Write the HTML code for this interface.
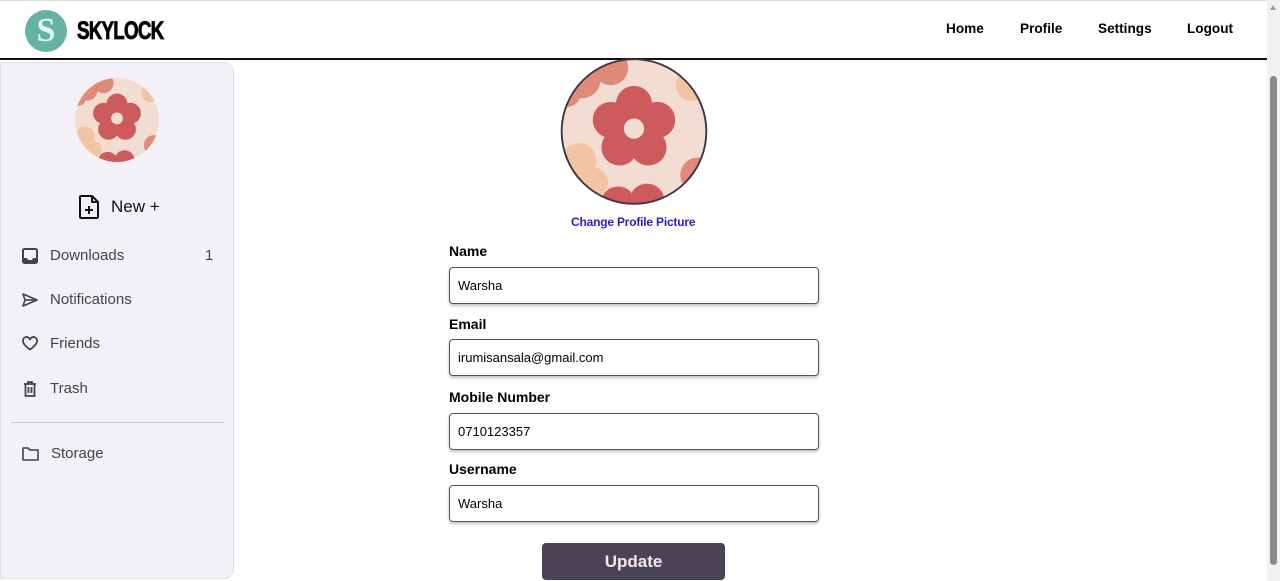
<!DOCTYPE html>
<html><head><meta charset="utf-8"><style>
*{box-sizing:border-box;margin:0;padding:0}
body{width:1280px;height:581px;overflow:hidden;background:#fff;font-family:"Liberation Sans",Arial,sans-serif;position:relative;color:#000}
.top{position:absolute;left:0;top:0;width:1267px;height:60px;border-top:1px solid #ddd;border-bottom:2px solid #111;background:#fff}
.logo{position:absolute;left:25px;top:9px;width:42px;height:42px;border-radius:50%;background:#66b3a6;color:#dff5ee;font:bold 34px "Liberation Serif",serif;text-align:center;line-height:42px}
.brand{position:absolute;left:77px;top:16px;font:bold 25px "Liberation Sans",sans-serif;letter-spacing:-1px;transform:scaleX(0.75);transform-origin:left;-webkit-text-stroke:0.8px #000}
.nav a{position:absolute;top:20px;font-weight:bold;font-size:13.6px;color:#000;text-decoration:none}
.side{position:absolute;left:0;top:62px;width:234px;height:517px;background:#f4f0f7;border:1px solid #e3dfe6;border-radius:0 10px 10px 0}
.item{position:absolute;left:21px;font-size:15px;color:#444;display:flex;align-items:center}
.item svg{margin-right:12px}
.scroll{position:absolute;right:0;top:0;width:13px;height:581px;background:#f1f1f1}
.thumb{position:absolute;left:3px;top:76px;width:7px;height:489px;background:#8a8a8a;border-radius:4px}
label{position:absolute;left:449px;font-weight:bold;font-size:14px}
.inp{position:absolute;left:449px;width:370px;height:37px;border:1px solid #555;border-radius:4px;box-shadow:0 2px 3px rgba(0,0,0,.25);font-size:13px;padding-left:8px;line-height:35px;background:#fff}
.btn{position:absolute;left:542px;top:543px;width:183px;height:37px;background:#4a4255;border-radius:4px;color:#f6e6ea;font-weight:bold;font-size:17px;text-align:center;line-height:37px}
</style></head><body>
<svg width="0" height="0" style="position:absolute"><defs>
<g id="fl">
<circle cx="50" cy="50" r="50" fill="#f3dcd2"/>
<g fill="#e08a7a"><circle cx="14" cy="14" r="13"/><circle cx="34" cy="6" r="12"/><circle cx="22" cy="-4" r="12"/><circle cx="4" cy="24" r="9"/></g>
<g fill="#f2c4a3"><circle cx="90" cy="18" r="11"/><circle cx="12" cy="70" r="12"/><circle cx="22" cy="85" r="10"/></g>
<g fill="#e08a7a"><circle cx="94" cy="80" r="12"/></g>
<g fill="#cd5b5b"><circle cx="39" cy="100" r="12"/><circle cx="59" cy="98" r="12"/>
<circle cx="50" cy="31" r="12.5"/><circle cx="66" cy="42" r="12.5"/><circle cx="60" cy="61" r="12.5"/><circle cx="40" cy="61" r="12.5"/><circle cx="34" cy="42" r="12.5"/><circle cx="50" cy="48" r="12"/></g>
<circle cx="50" cy="48" r="7" fill="#f3dcd2"/>
</g>
<clipPath id="cc"><circle cx="50" cy="50" r="50"/></clipPath>
</defs></svg>
<div class="top">
<div class="logo">S</div><div class="brand">SKYLOCK</div>
<div class="nav"><a style="left:946px">Home</a><a style="left:1020px">Profile</a><a style="left:1098px">Settings</a><a style="left:1187px">Logout</a></div>
</div>
<div class="side">
<svg style="position:absolute;left:74px;top:15px" width="84" height="84" viewBox="0 0 100 100"><g clip-path="url(#cc)"><use href="#fl"/></g></svg>
<div style="position:absolute;left:77px;top:131px;display:flex;align-items:center;font-size:17px;color:#111">
<svg width="22" height="26" viewBox="0 0 22 26" fill="none" stroke="#111" stroke-width="2" stroke-linejoin="round"><path d="M3 2h11l6 6v15a1 1 0 0 1-1 1H3a1 1 0 0 1-1-1V3a1 1 0 0 1 1-1z"/><path d="M14 2v6h6"/><path d="M11 12v8M7 16h8"/></svg>
<span style="margin-left:11px">New +</span></div>
<div class="item" style="top:184px"><svg width="16" height="16" viewBox="0 0 16 16"><rect x="1" y="1" width="14" height="14" rx="1.5" fill="none" stroke="#444" stroke-width="2"/><path d="M1 10h4l1 2h4l1-2h4v5H1z" fill="#444"/></svg>Downloads</div>
<div class="item" style="top:184px;left:204px">1</div>
<div class="item" style="top:228px"><svg width="16" height="14" viewBox="0 0 16 14" fill="none" stroke="#444" stroke-width="1.6" stroke-linejoin="round"><path d="M1 1l14 6L1 13l2-6z"/><path d="M3 7h12"/></svg>Notifications</div>
<div class="item" style="top:272px"><svg width="16" height="15" viewBox="0 0 16 15" fill="none" stroke="#444" stroke-width="1.8"><path d="M8 13.5S1 9 1 5a3.5 3.5 0 0 1 7-1 3.5 3.5 0 0 1 7 1c0 4-7 8.5-7 8.5z"/></svg>Friends</div>
<div class="item" style="top:317px"><svg width="16" height="16" viewBox="0 0 16 16" fill="none" stroke="#444" stroke-width="1.8"><path d="M2 3h12M6 3V1h4v2M3.5 3v12h9V3M6.5 6v6M9.5 6v6"/></svg>Trash</div>
<div style="position:absolute;left:10px;top:359px;width:213px;height:1px;background:#c8c4cb"></div>
<div class="item" style="top:382px"><svg width="17" height="15" viewBox="0 0 17 15" fill="none" stroke="#444" stroke-width="1.6" stroke-linejoin="round"><path d="M1 2h5l2 2h8v10H1z"/></svg>Storage</div>
</div>
<svg style="position:absolute;left:559px;top:57px" width="150" height="149" viewBox="-1.5 -1.5 103 103"><g clip-path="url(#cc)"><use href="#fl"/></g><circle cx="50" cy="50" r="50" fill="none" stroke="#3f3346" stroke-width="1.3"/></svg>
<div style="position:absolute;left:571px;top:215px;color:#2a1fc0;font-weight:bold;font-size:12px;letter-spacing:-0.2px">Change Profile Picture</div>
<label style="top:243px">Name</label><div class="inp" style="top:267px">Warsha</div>
<label style="top:316px">Email</label><div class="inp" style="top:339px">irumisansala@gmail.com</div>
<label style="top:389px">Mobile Number</label><div class="inp" style="top:413px">0710123357</div>
<label style="top:461px">Username</label><div class="inp" style="top:485px">Warsha</div>
<div class="btn">Update</div>
<div class="scroll"><div style="position:absolute;left:3px;top:5px;width:0;height:0;border-left:3.5px solid transparent;border-right:3.5px solid transparent;border-bottom:5px solid #999"></div><div class="thumb"></div></div>
</body></html>
